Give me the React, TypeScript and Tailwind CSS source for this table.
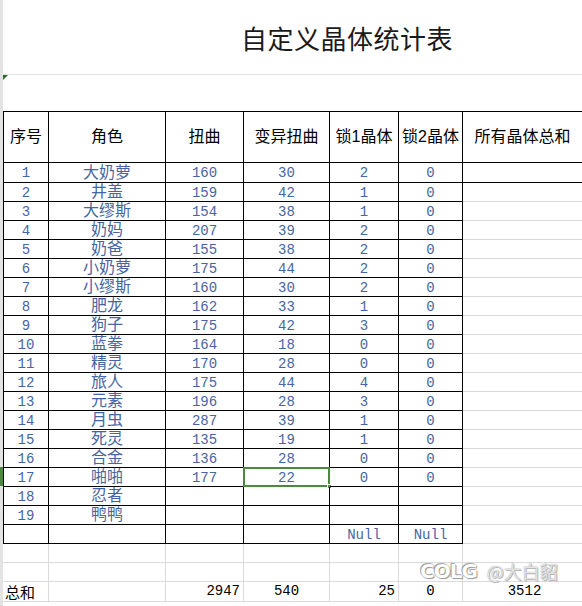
import React from "react";

const W = ["w-[46px]", "w-[117px]", "w-[78px]", "w-[86px]", "w-[69px]", "w-[64px]", "w-[119px]"];

type Row = [string, string, string, string, string, string];

const rows: Row[] = [
  ["1", "大奶萝", "160", "30", "2", "0"],
  ["2", "井盖", "159", "42", "1", "0"],
  ["3", "大缪斯", "154", "38", "1", "0"],
  ["4", "奶妈", "207", "39", "2", "0"],
  ["5", "奶爸", "155", "38", "2", "0"],
  ["6", "小奶萝", "175", "44", "2", "0"],
  ["7", "小缪斯", "160", "30", "2", "0"],
  ["8", "肥龙", "162", "33", "1", "0"],
  ["9", "狗子", "175", "42", "3", "0"],
  ["10", "蓝拳", "164", "18", "0", "0"],
  ["11", "精灵", "170", "28", "0", "0"],
  ["12", "旅人", "175", "44", "4", "0"],
  ["13", "元素", "196", "28", "3", "0"],
  ["14", "月虫", "287", "39", "1", "0"],
  ["15", "死灵", "135", "19", "1", "0"],
  ["16", "合金", "136", "28", "0", "0"],
  ["17", "啪啪", "177", "22", "0", "0"],
  ["18", "忍者", "", "", "", ""],
  ["19", "鸭鸭", "", "", "", ""],
  ["", "", "", "", "Null", "Null"],
];

const headers = ["序号", "角色", "扭曲", "变异扭曲", "锁1晶体", "锁2晶体", "所有晶体总和"];

const dataFont = "font-['Liberation_Mono','Noto_Sans_CJK_SC',monospace]";

function DataRow({ r, idx }: { r: Row; idx: number }) {
  const h = idx === 0 ? "h-[20px]" : "h-[19px]";
  const selected = idx === 16;
  return (
    <div className={`flex ${h}`}>
      {r.map((v, c) => (
        <div
          key={c}
          className={`${W[c]} relative shrink-0 border-r border-b border-black flex items-center justify-center text-[#4665a3] leading-[19px] ${c === 1 ? "text-[16px] pt-[3px]" : "text-[14px] pt-[2px]"} ${c === 0 ? "border-l" : ""} ${dataFont}`}
        >
          {v}
          {selected && c === 3 && (
            <div className="absolute -left-[1px] -top-[1px] -right-[1px] -bottom-[1px] border-2 border-[#4a8a3c]">
              <div className="absolute -right-[4px] -bottom-[4px] w-[5px] h-[5px] bg-[#4a8a3c] border border-white" />
            </div>
          )}
        </div>
      ))}
      <div className={`${W[6]} shrink-0 border-b ${idx === 0 ? "border-black" : "border-[#d9d9d9]"}`} />
    </div>
  );
}

function GridRow({ h, children }: { h: string; children?: React.ReactNode[] }) {
  return (
    <div className={`flex ${h}`}>
      {W.map((w, c) => (
        <div
          key={c}
          className={`${w} shrink-0 border-b border-[#dadada] ${c < 6 ? "border-r" : ""} flex items-end text-[14px] text-black leading-[16px]`}
        >
          {children ? children[c] : null}
        </div>
      ))}
    </div>
  );
}

export default function App() {
  return (
    <div className="w-[582px] h-[606px] bg-white relative overflow-hidden flex font-['Noto_Sans_CJK_SC',sans-serif]">
      <div className="w-[3px] shrink-0 flex flex-col bg-[#e3e3e3]">
        <div className="h-[467px]" />
        <div className="h-[19px] bg-[#4a8a3c]" />
      </div>
      <div className="flex-1 flex flex-col">
        <div className="h-[75px] border-b border-[#e2e2e2] flex items-center pl-[238px] pt-[2px]">
          <span className="text-[26px] text-[#1a1a1a] font-['Noto_Sans_CJK_SC',sans-serif] tracking-[0.5px] leading-none">
            自定义晶体统计表
          </span>
        </div>
        <div className="h-[36px] relative">
          <div className="absolute left-0 top-0 w-0 h-0 border-t-[5px] border-r-[5px] border-t-[#2f6b2f] border-r-transparent" />
        </div>
        <div className="border-t border-black">
          <div className="flex h-[51px]">
            {headers.map((t, c) => (
              <div
                key={c}
                className={`${W[c]} shrink-0 border-b border-black ${c < 6 ? "border-r" : ""} ${c === 0 ? "border-l" : ""} flex items-center justify-center text-[16px] text-black font-['Liberation_Sans','Noto_Sans_CJK_SC',sans-serif] whitespace-nowrap`}
              >
                {t}
              </div>
            ))}
          </div>
          {rows.map((r, i) => (
            <DataRow key={i} r={r} idx={i} />
          ))}
        </div>
        <GridRow h="h-[19px]" />
        <GridRow h="h-[19px]" />
        <GridRow
          h="h-[20px]"
          children={[
            <span key="a" className="pl-[2px] pb-[1px] text-[15px] font-['Noto_Sans_CJK_SC',sans-serif]">总和</span>,
            <span key="b" />,
            <span key="c" className={`w-full text-right pr-[3px] pb-[2px] ${dataFont}`}>2947</span>,
            <span key="d" className={`w-full text-center pb-[2px] ${dataFont}`}>540</span>,
            <span key="e" className={`w-full text-right pr-[3px] pb-[2px] ${dataFont}`}>25</span>,
            <span key="f" className={`w-full text-center pb-[2px] ${dataFont}`}>0</span>,
            <span key="g" className={`w-full text-center pl-[4px] pb-[2px] ${dataFont}`}>3512</span>,
          ]}
        />
        <div className="flex-1" />
      </div>
      <div className="absolute left-[420px] top-[563px] h-[16px] flex items-center gap-[10px] pointer-events-none">
        <span className="text-[20px] leading-[16px] font-black text-white font-['DejaVu_Sans',sans-serif] tracking-[-1px] [text-shadow:0_0_1px_#777,1px_1px_1px_#999,-1px_-1px_0_#aaa]">
          COLG
        </span>
        <span className="text-[18px] leading-[16px] text-[#e4e4e4] font-['Noto_Sans_CJK_SC',sans-serif] [text-shadow:0_0_1px_#999,1px_1px_0_#bbb]">
          @大白貂
        </span>
      </div>
    </div>
  );
}
